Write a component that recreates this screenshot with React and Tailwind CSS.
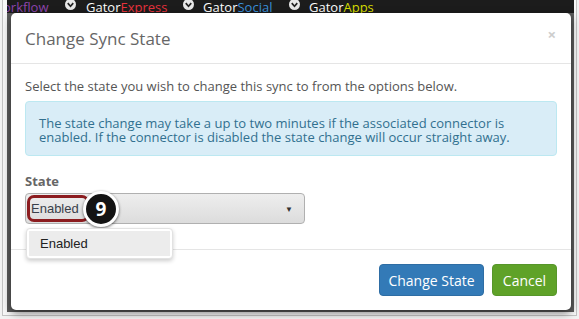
import React from "react";

const Chevron = () => (
  <svg width="11" height="11" viewBox="0 0 12 12" className="shrink-0">
    <circle cx="6" cy="6" r="6" fill="#e8e8e8" />
    <path d="M3 4.5 L6 8 L9 4.5" stroke="#222" strokeWidth="1.8" fill="none" />
  </svg>
);

const NavItem = ({ accent, color, width }) => (
  <span className={`whitespace-nowrap inline-block ${width}`}>
    <span className="text-white">Gator</span>
    <span className={color}>{accent}</span>
  </span>
);

const NavBar = () => (
  <div className="h-[13px] bg-[#1c1c1c] overflow-hidden flex items-end text-[13px] leading-[14px] font-['Open_Sans',sans-serif]">
    <div className="flex items-center mb-[-1px]">
      <span className="text-[#8e44ad] ml-[-4px] w-[54px]">orkflow</span>
      <span className="ml-[8px] mt-[-6px]"><Chevron /></span>
      <span className="ml-[10px]">
        <NavItem accent="Express" color="text-[#e8323c]" width="w-[82px]" />
      </span>
      <span className="ml-[15px] mt-[-6px]"><Chevron /></span>
      <span className="ml-[9px]">
        <NavItem accent="Social" color="text-[#3a8fd9]" width="w-[72px]" />
      </span>
      <span className="ml-[14px] mt-[-6px]"><Chevron /></span>
      <span className="ml-[9px]">
        <NavItem accent="Apps" color="text-[#d6df00]" width="w-[70px]" />
      </span>
    </div>
  </div>
);

const App = () => {
  return (
    <div className="w-[579px] h-[319px] bg-[#f3f3f3] pl-[2px] overflow-hidden">
      <div className="w-[575px] h-[316px] bg-[#f8f8f8] border-x border-b border-[#c4c4c4] pl-[4px] pr-[1px] pb-[3px]">
        <div className="w-[567px] h-[312px] bg-[#5c5c5c] flex flex-col">
          <NavBar />
          <div className="relative ml-[4px] mr-[3px] h-[297px] bg-white rounded-[5px] shadow-[0_3px_9px_rgba(0,0,0,0.5)] flex flex-col font-['Open_Sans',sans-serif] text-[#555]">
            <div className="h-[51px] border-b border-[#e5e5e5] pl-[14px] pr-[15px] pt-[15px] flex justify-between">
              <h4 className="text-[17px] leading-[22px] text-[#666]">Change Sync State</h4>
              <span className="text-[15px] leading-[15px] font-bold text-[#cdcdcd] mt-[-1px]">×</span>
            </div>
            <div className="px-[14px] pt-[13px] pb-[25px] flex flex-col">
              <p className="text-[13px] leading-[18px]">
                Select the state you wish to change this sync to from the options below.
              </p>
              <div className="mt-[6px] h-[55px] bg-[#d9edf7] border border-[#bce8f1] rounded-[4px] px-[13px] pt-[14px] text-[13px] leading-[14px] text-[#31708f]">
                The state change may take a up to two minutes if the associated connector is enabled. If the connector is disabled the state change will occur straight away.
              </div>
              <label className="mt-[16px] text-[13px] leading-[18px] font-bold text-[#666]">State</label>
              <div className="relative mt-[3px] w-[280px] h-[31px] rounded-[4px] border border-[#b0b0b0] bg-linear-to-b from-[#eeeeee] to-[#dcdcdc] flex items-center justify-between pl-[5px] pr-[11px]">
                <span className="font-['Liberation_Sans',Arial,sans-serif] text-[13px] text-[#3a3f4a]">Enabled</span>
                <span className="text-[8px] text-[#333]">▼</span>
                <div className="absolute left-[1px] top-[1px] w-[62px] h-[27px] border-[3px] border-[#8c1c1f] rounded-[7px]" />
                <div className="absolute left-[57px] top-[-3px] w-[36px] h-[36px] rounded-full bg-[#141414] border-[3px] border-white shadow-[0_1px_3px_rgba(0,0,0,0.6)] flex items-center justify-center text-white font-bold text-[19px] font-['Open_Sans',sans-serif]">
                  9
                </div>
              </div>
            </div>
            <div className="border-t border-[#e5e5e5] flex justify-end gap-[8px] pt-[14px] pr-[14px]">
              <button className="h-[32px] w-[105px] rounded-[4px] bg-[#337ab7] border border-[#2e6da4] text-white text-[14px]">
                Change State
              </button>
              <button className="h-[32px] w-[65px] rounded-[4px] bg-[#5fa228] border border-[#57962a] text-white text-[14px]">
                Cancel
              </button>
            </div>
            <div className="absolute left-[15px] top-[215px] w-[147px] h-[31px] bg-white rounded-[4px] border border-[#e2e2e2] shadow-[0_2px_4px_rgba(0,0,0,0.2)] p-[2px]">
              <div className="h-[25px] bg-[#ececec] flex items-center pl-[11px] font-['Liberation_Sans',Arial,sans-serif] text-[13px] text-[#222]">
                Enabled
              </div>
            </div>
          </div>
        </div>
      </div>
    </div>
  );
};

export default App;
